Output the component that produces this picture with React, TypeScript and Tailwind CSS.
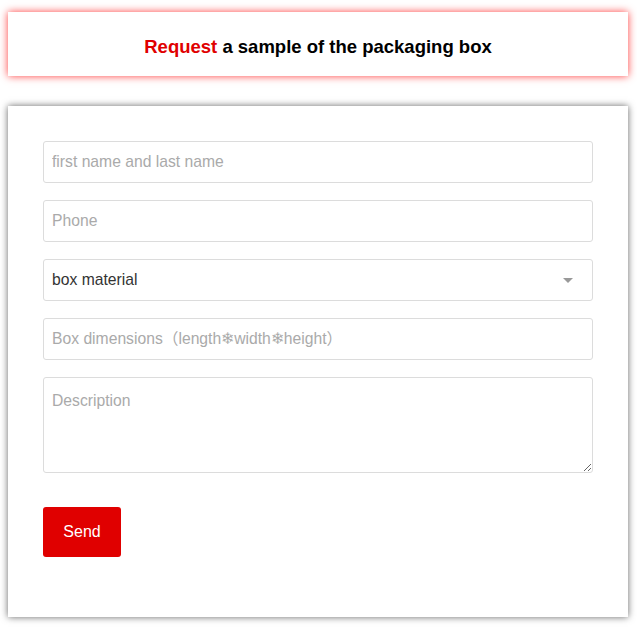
import React from 'react'

const inputCls =
    "w-full h-[42px] px-[8px] border border-[#dcdcdc] rounded-[3px] text-[15.7px] text-[#333] placeholder:text-[#aaa] outline-none bg-white"

const App = () => {
    return (
        <div className="min-h-screen bg-white px-2 pt-3 pb-4" style={{ fontFamily: '"Liberation Sans", Arial, "Noto Sans CJK SC", sans-serif' }}>
            <div className="w-[620px] h-[64px] pt-[6px] bg-white flex items-center justify-center shadow-[0_0_8px_rgba(255,0,0,0.75)]">
                <h2 className="text-[18.5px] font-bold text-black">
                    <span className="text-[#e00000]">Request</span> a sample of the packaging box
                </h2>
            </div>

            <div className="w-[620px] mt-[30px] bg-white pt-[35px] pb-[60px] px-[35px] shadow-[0_0_7px_rgba(0,0,0,0.6)]">
                <form className="flex flex-col gap-[17px]">
                    <input type="text" placeholder="first name and last name" className={inputCls} />
                    <input type="text" placeholder="Phone" className={inputCls} />
                    <div className="relative">
                        <select className={inputCls + " appearance-none"} defaultValue="">
                            <option value="">box material</option>
                            <option value="paper">paper</option>
                            <option value="kraft">kraft</option>
                        </select>
                        <span className="absolute right-[20px] top-[19px] w-0 h-0 border-l-[5px] border-r-[5px] border-t-[5px] border-l-transparent border-r-transparent border-t-[#999] pointer-events-none" />
                    </div>
                    <input type="text" placeholder="Box dimensions（length❄width❄height）" className={inputCls} />
                    <textarea
                        placeholder="Description"
                        className="w-full h-[96px] px-[8px] py-[11px] border border-[#dcdcdc] rounded-[3px] text-[15.7px] text-[#333] placeholder:text-[#aaa] outline-none bg-white block"
                    ></textarea>
                    <div className="pt-[17px]">
                        <button
                            type="submit"
                            className="w-[78px] h-[50px] bg-[#e00000] text-white text-[16px] rounded-[3px]"
                        >
                            Send
                        </button>
                    </div>
                </form>
            </div>
        </div>
    )
}

export default App
